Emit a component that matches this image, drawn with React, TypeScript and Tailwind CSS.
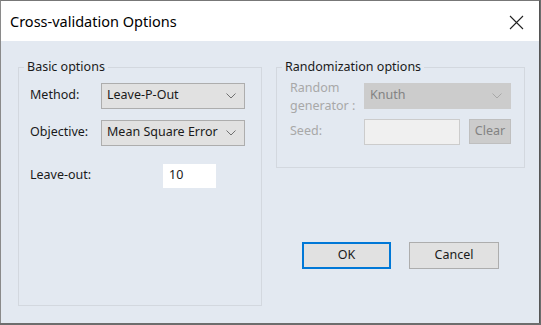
import React from 'react';

const font = { fontFamily: '"Noto Sans", "Open Sans", sans-serif' };

const Chevron: React.FC<{ color: string }> = ({ color }) => (
  <svg width="10" height="6" viewBox="0 0 10 6" className="shrink-0">
    <path d="M0.5 0.5 L5 5 L9.5 0.5" fill="none" stroke={color} strokeWidth="1" />
  </svg>
);

const Select: React.FC<{ value: string; disabled?: boolean; className?: string }> = ({ value, disabled, className }) => (
  <div
    className={
      'flex items-center justify-between pl-[5px] pr-[8px] border ' +
      (disabled ? 'bg-[#cccccc] border-[#cccccc] text-[#838383]' : 'bg-[#e1e1e1] border-[#adadad] text-[#1a1a1a]') +
      ' ' +
      (className || '')
    }
  >
    <span>{value}</span>
    <Chevron color={disabled ? '#a8a8a8' : '#707070'} />
  </div>
);

const App: React.FC = () => {
  return (
    <div className="w-[541px] h-[325px] bg-[#6d6d6d] text-[12.5px] text-[#1a1a1a] overflow-hidden" style={font}>
      <div className="w-[540px] h-[323px] flex flex-col border-l border-[#8a8a8a] border-t border-t-[#777777] border-r border-r-[#555555] bg-[#e3e9f1]">
        {/* title bar */}
        <div className="h-[40px] shrink-0 bg-white flex items-center justify-between pl-[9px] pr-[15px] pt-[2px]">
          <span className="text-[14.5px] text-black">Cross-validation Options</span>
          <svg width="15" height="15" viewBox="0 0 15 15">
            <path d="M1 1 L14 14 M14 1 L1 14" stroke="#222" strokeWidth="1.1" fill="none" />
          </svg>
        </div>

        {/* body */}
        <div className="flex-1 flex gap-[14px] pl-[17px] pr-[14px] pt-[17px] pb-[17px]">
          {/* basic options */}
          <fieldset className="w-[244px] border border-[#d3d8df] pl-[11px] pr-[16px] pt-[6px]">
            <legend className="-ml-[6px] px-[3px] text-[#1a1a1a]">Basic options</legend>
            <div className="flex items-center h-[26px]">
              <span className="w-[71px]">Method:</span>
              <Select value="Leave-P-Out" className="w-[144px] h-[26px]" />
            </div>
            <div className="flex items-center h-[26px] mt-[11px]">
              <span className="w-[71px]">Objective:</span>
              <Select value="Mean Square Error" className="w-[144px] h-[26px]" />
            </div>
            <div className="flex items-center h-[26px] mt-[17px]">
              <span className="w-[132px]">Leave-out:</span>
              <div className="w-[55px] h-[26px] bg-white border border-[#e3e9f1] flex items-center pl-[6px]">10</div>
            </div>
          </fieldset>

          {/* right column */}
          <div className="flex-1 flex flex-col">
            <fieldset className="h-[110px] border border-[#d3d8df] pl-[13px] pr-[13px] pt-[6px]">
              <legend className="-ml-[8px] px-[3px] text-[#1a1a1a]">Randomization options</legend>
              <div className="flex items-center h-[26px]">
                <span className="w-[74px] text-[#a8a8a8] leading-[18px] pt-[2px]">Random generator :</span>
                <Select value="Knuth" disabled className="flex-1 h-[26px]" />
              </div>
              <div className="flex items-center h-[26px] mt-[10px]">
                <span className="w-[74px] text-[#a8a8a8]">Seed:</span>
                <div className="w-[96px] h-[26px] bg-[#f0f0f0] border border-[#cccccc]" />
                <div className="ml-[9px] flex-1 h-[25px] bg-[#cccccc] border border-[#bfbfbf] flex items-center justify-center text-[#838383]">
                  Clear
                </div>
              </div>
            </fieldset>

            <div className="flex gap-[18px] mt-[74px] ml-[26px]">
              <button className="w-[89px] h-[27px] bg-[#e1e1e1] border-2 border-[#0078d7] text-[#1a1a1a]">OK</button>
              <button className="w-[90px] h-[27px] bg-[#e1e1e1] border border-[#adadad] text-[#1a1a1a]">Cancel</button>
            </div>
          </div>
        </div>
      </div>
    </div>
  );
};

export default App;
